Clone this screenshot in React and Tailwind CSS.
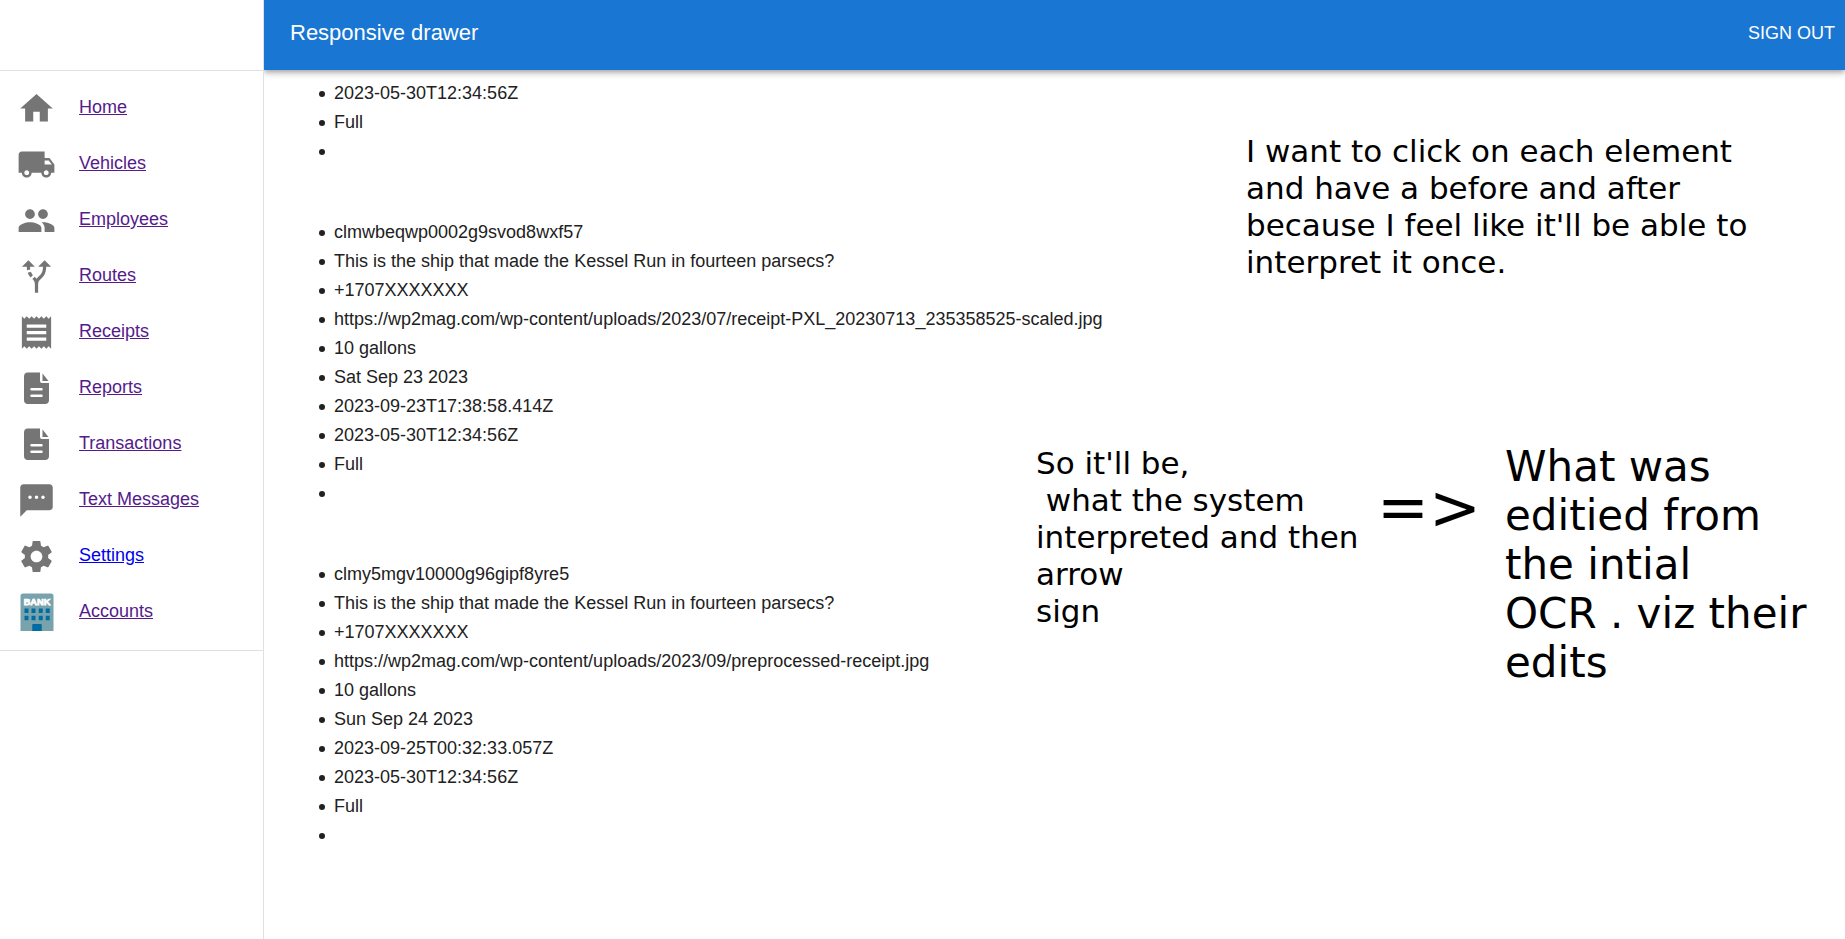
import {
  MdAltRoute,
  MdHome,
  MdLocalShipping,
  MdPeople,
  MdReceipt,
  MdSettings,
} from "react-icons/md";

function BankIcon() {
  const windows = [18, 46, 75, 103];
  return (
    <svg viewBox="0 0 136 152" className="h-[38px] w-[34px]" aria-hidden="true">
      <path d="M2 152V12Q2 2 12 2H124Q134 2 134 12V152Z" fill="#78a3ad" />
      <text
        x="68"
        y="46"
        textAnchor="middle"
        fontSize="37"
        fontWeight="700"
        fill="#fff"
        stroke="#fff"
        strokeWidth="3"
        fontFamily="'Liberation Sans', sans-serif"
      >
        BANK
      </text>
      {windows.map((x) => (
        <g key={x} fill="#006ca2">
          <rect x={x} y="62" width="16" height="18" />
          <rect x={x} y="91" width="16" height="18" />
        </g>
      ))}
      <path d="M49 152V128Q49 124 53 124H83Q87 124 87 128V152Z" fill="#006ca2" />
    </svg>
  );
}

function DocumentIcon() {
  return (
    <svg viewBox="0 0 25 32" className="h-8 w-[25px]" fill="currentColor" aria-hidden="true">
      <path
        fillRule="evenodd"
        d="M4 0.5H16V9Q16 11 18 11H25V28Q25 32 21 32H4Q0 32 0 28V4.500Q0 0.500 4 0.500ZM7.500 16A1 1 0 0 0 7.500 18.500H17.500A1 1 0 0 0 17.500 16ZM7.500 22.500A1 1 0 0 0 7.500 25H17.500A1 1 0 0 0 17.500 22.500Z"
      />
      <path d="M18.500 1.500L24.500 9H18.500Z" />
    </svg>
  );
}

function MessageIcon() {
  return (
    <svg viewBox="0 0 24 24" className="size-[39px]" fill="currentColor" aria-hidden="true">
      <path
        fillRule="evenodd"
        d="M4 2H20C21.100 2 22 2.900 22 4V16C22 17.100 21.100 18 20 18H6L2 22V4C2 2.900 2.900 2 4 2ZM8 8.900A1.100 1.100 0 1 0 8 11.100A1.100 1.100 0 1 0 8 8.900ZM12 8.900A1.100 1.100 0 1 0 12 11.100A1.100 1.100 0 1 0 12 8.900ZM16 8.900A1.100 1.100 0 1 0 16 11.100A1.100 1.100 0 1 0 16 8.900Z"
      />
    </svg>
  );
}

const NAV = [
  { label: "Home", icon: <MdHome size={39} /> },
  { label: "Vehicles", icon: <MdLocalShipping size={39} /> },
  { label: "Employees", icon: <MdPeople size={39} /> },
  { label: "Routes", icon: <MdAltRoute size={39} /> },
  { label: "Receipts", icon: <MdReceipt size={39} /> },
  { label: "Reports", icon: <DocumentIcon /> },
  { label: "Transactions", icon: <DocumentIcon /> },
  { label: "Text Messages", icon: <MessageIcon /> },
  { label: "Settings", icon: <MdSettings size={39} />, unvisited: true },
  { label: "Accounts", icon: <BankIcon /> },
];

const RECORDS = [
  ["2023-05-30T12:34:56Z", "Full", ""],
  [
    "clmwbeqwp0002g9svod8wxf57",
    "This is the ship that made the Kessel Run in fourteen parsecs?",
    "+1707XXXXXXX",
    "https://wp2mag.com/wp-content/uploads/2023/07/receipt-PXL_20230713_235358525-scaled.jpg",
    "10 gallons",
    "Sat Sep 23 2023",
    "2023-09-23T17:38:58.414Z",
    "2023-05-30T12:34:56Z",
    "Full",
    "",
  ],
  [
    "clmy5mgv10000g96gipf8yre5",
    "This is the ship that made the Kessel Run in fourteen parsecs?",
    "+1707XXXXXXX",
    "https://wp2mag.com/wp-content/uploads/2023/09/preprocessed-receipt.jpg",
    "10 gallons",
    "Sun Sep 24 2023",
    "2023-09-25T00:32:33.057Z",
    "2023-05-30T12:34:56Z",
    "Full",
    "",
  ],
];

function Sidebar() {
  return (
    <nav className="z-10 w-[264px] shrink-0 border-r border-[#e0e0e0] bg-white">
      <div className="h-[70px]" />
      <ul className="border-y border-[#e0e0e0] pt-[9px] pb-[10px]">
        {NAV.map(({ label, icon, unvisited }) => (
          <li key={label} className="flex h-14 items-center pl-[17px]">
            <span className="flex w-[62px] shrink-0 text-[#757575]">
              <span className="flex w-[39px] justify-center">{icon}</span>
            </span>
            <a
              href={"#" + label.toLowerCase().replace(" ", "-")}
              className={
                unvisited ? "pb-0.5 text-[#0000ee] underline" : "pb-0.5 text-[#551a8b] underline"
              }
            >
              {label}
            </a>
          </li>
        ))}
      </ul>
    </nav>
  );
}

const NOTE = "absolute whitespace-pre font-['DejaVu_Sans',sans-serif] text-black";

export default function App() {
  return (
    <div className="flex min-h-screen bg-white font-['Liberation_Sans',Arial,sans-serif] text-[18px] leading-[26px] text-[#212121]">
      <Sidebar />
      <div className="relative min-w-0 flex-1">
        <header className="flex h-[70px] items-center justify-between bg-[#1976d2] pr-[10px] pb-1 pl-[26px] text-white shadow-[0_2px_4px_-1px_rgba(0,0,0,0.2),0_4px_5px_0_rgba(0,0,0,0.14),0_1px_10px_0_rgba(0,0,0,0.12)]">
          <h1 className="text-[22px]">Responsive drawer</h1>
          <button type="button" className="uppercase">
            Sign out
          </button>
        </header>
        <main className="flex flex-col gap-[52px] pt-[9px] pl-[26px]">
          {RECORDS.map((record, i) => (
            <ul key={i} className="pl-[29px] leading-[29px]">
              {record.map((value, j) => (
                <li
                  key={j}
                  className="flex min-h-[29px] items-center gap-[9px] before:size-1.5 before:shrink-0 before:rounded-full before:bg-[#212121]"
                >
                  {value}
                </li>
              ))}
            </ul>
          ))}
        </main>
        <p className={NOTE + " top-[133px] left-[982px] text-[31px] leading-[37px]"}>
          {"I want to click on each element\nand have a before and after\nbecause I feel like it'll be able to\ninterpret it once."}
        </p>
        <p className={NOTE + " top-[445px] left-[772px] text-[31px] leading-[37px]"}>
          {"So it'll be,\n what the system\ninterpreted and then\narrow\nsign"}
        </p>
        <p className={NOTE + " top-[472px] left-[1113px] text-[62px] leading-[72px]"}>{"=>"}</p>
        <p className={NOTE + " top-[442px] left-[1241px] text-[42px] leading-[49px]"}>
          {"What was\neditied from\nthe intial\nOCR . viz their\nedits"}
        </p>
      </div>
    </div>
  );
}
